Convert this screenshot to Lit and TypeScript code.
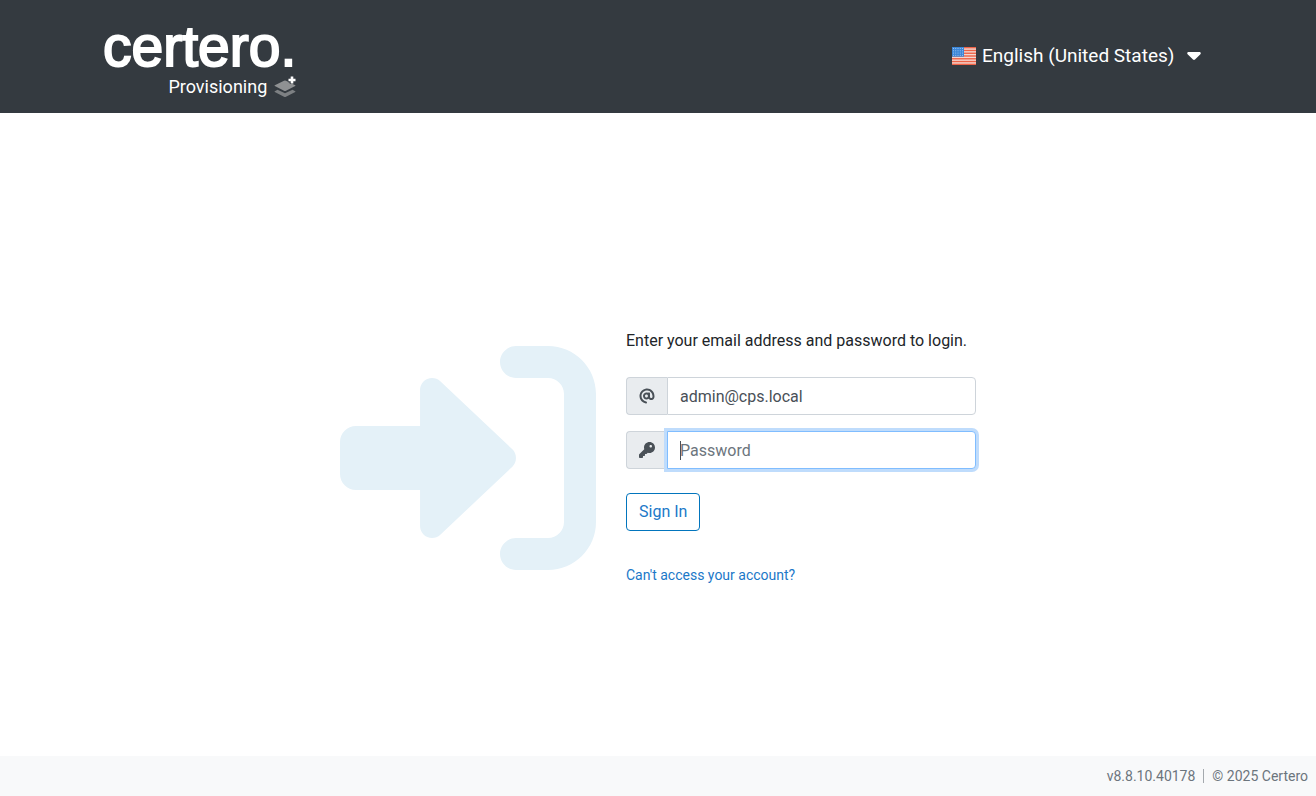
import { LitElement, html, css, svg } from "lit";
import { customElement, query, state } from "lit/decorators.js";

const stripes = [0, 1, 2, 3, 4, 5, 6];
const starRows = [0, 1, 2, 3];
const starCols = [0, 1, 2, 3, 4];

@customElement("app-header")
class AppHeader extends LitElement {
  static styles = css`
    :host {
      display: block;
      background: #343a40;
      color: #fff;
    }
    .bar {
      box-sizing: border-box;
      max-width: 1140px;
      margin: 0 auto;
      padding: 16px 15px 15px;
      display: flex;
      align-items: flex-start;
      justify-content: space-between;
    }
    .brand {
      display: flex;
      flex-direction: column;
      align-items: flex-end;
      color: inherit;
      text-decoration: none;
    }
    .name {
      font: 400 57px/60px "Liberation Sans", Arial, sans-serif;
      -webkit-text-stroke: 2px #fff;
    }
    .product {
      display: flex;
      align-items: center;
      gap: 7px;
      font-size: 18px;
      line-height: 20px;
    }
    .layers {
      width: 22px;
      height: 22px;
    }
    .language {
      display: flex;
      align-items: center;
      height: 80px;
      padding-right: 12px;
      gap: 6px;
    }
    .flag {
      width: 24px;
      height: 20px;
    }
    select {
      appearance: none;
      border: 0;
      margin: 0;
      padding: 0;
      background: none;
      color: inherit;
      font: inherit;
      font-size: 19px;
      line-height: 28px;
      outline: 0;
    }
    .caret {
      width: 14px;
      height: 8px;
      margin-left: 6px;
    }
  `;

  render() {
    return html`
      <header class="bar">
        <a class="brand" href="#">
          <span class="name">certero.</span>
          <span class="product">
            Provisioning
            <svg class="layers" viewBox="0 0 22 22" aria-hidden="true">
              <path fill="#7d8083" d="M0.8 15.2L3.5 13.8 11 17.3 18.5 13.8 21.2 15.2Q21.8 15.6 21.2 16L12 20.7Q11 21.1 10 20.7L0.8 16Q0.2 15.6 0.8 15.2Z" />
              <path fill="#8f9193" d="M0.8 9.2L10 4.8Q11 4.4 12 4.8L21.2 9.2Q21.8 9.7 21.2 10.1L12 14.7Q11 15.1 10 14.7L0.8 10.1Q0.2 9.7 0.8 9.2Z" />
              <path fill="none" stroke="#343a40" stroke-width="4.5" d="M18 0v8M14 4h8" />
              <path fill="none" stroke="#fff" stroke-width="2.6" d="M18 0.5v7M14.5 4h7" />
            </svg>
          </span>
        </a>
        <div class="language">
          <svg class="flag" viewBox="0 0 24 20" aria-hidden="true">
            <rect y="1" width="24" height="18" fill="#f3d8d2" />
            ${stripes.map((i) => svg`<rect y=${1 + i * 2.77} width="24" height="1.4" fill="#ee6246" />`)}
            <rect y="1" width="12" height="9.7" fill="#3b86d8" />
            ${starRows.map((r) =>
              starCols.map((c) => svg`<circle cx=${1.5 + c * 2.25} cy=${2.4 + r * 2.3} r="0.5" fill="#b9d7f5" />`)
            )}
          </svg>
          <select aria-label="Language">
            <option>English (United States)</option>
          </select>
          <svg class="caret" viewBox="0 0 14 8" aria-hidden="true">
            <path fill="#fff" d="M1.5 0h11c1.2 0 1.7 1.4.9 2.2L8 7.5c-.6.6-1.4.6-2 0L.6 2.2C-.2 1.4.3 0 1.5 0z" />
          </svg>
        </div>
      </header>
    `;
  }
}

@customElement("login-form")
class LoginForm extends LitElement {
  @state() email = "admin@cps.local";
  @query("#password") password!: HTMLInputElement;

  static styles = css`
    :host {
      display: block;
    }
    form {
      display: flex;
      flex-direction: column;
      align-items: flex-start;
      padding-bottom: 2px;
    }
    .intro {
      margin: 0 0 24px;
      font-size: 16px;
      line-height: 24px;
      color: #212529;
    }
    .group {
      display: flex;
      width: 100%;
      height: 38px;
      margin-bottom: 16px;
    }
    .addon {
      box-sizing: border-box;
      display: flex;
      align-items: center;
      padding: 0 12px;
      border: 1px solid #ced4da;
      border-right: 0;
      border-radius: 4px 0 0 4px;
      background: #e9ecef;
      color: #495057;
    }
    .addon svg {
      width: 16px;
      height: 16px;
      fill: currentColor;
    }
    input {
      box-sizing: border-box;
      flex: 1;
      min-width: 0;
      margin: 0;
      padding: 7px 12px 5px;
      border: 1px solid #ced4da;
      border-radius: 0 4px 4px 0;
      background: #fff;
      color: #495057;
      font: inherit;
      font-size: 16px;
      line-height: 24px;
      outline: 0;
    }
    input::placeholder {
      color: #6c757d;
      opacity: 1;
    }
    input:focus {
      border-color: #80bdff;
      box-shadow: 0 0 0 3px #bfdcfc;
    }
    /* Steady caret while the focused field is still empty. */
    input:focus:placeholder-shown {
      caret-color: transparent;
      background: linear-gradient(#495057, #495057) 12px center / 1px 19px no-repeat #fff;
    }
    button {
      margin: 8px 0 34px;
      padding: 6px 12px;
      border: 1px solid #0275bd;
      border-radius: 4px;
      background: #fff;
      color: #1b78c8;
      font: inherit;
      font-size: 16px;
      line-height: 24px;
    }
    .help {
      font-size: 14px;
      line-height: 20px;
      color: #1b78c8;
      text-decoration: none;
    }
  `;

  firstUpdated() {
    this.password.focus();
  }

  render() {
    return html`
      <form @submit=${(e: Event) => e.preventDefault()}>
        <p class="intro">Enter your email address and password to login.</p>
        <div class="group">
          <label class="addon" for="email" aria-label="Email address">
            <svg viewBox="0 0 512 512" aria-hidden="true">
              <path d="M207.8 20.73c-93.45 18.32-168.7 93.66-187 187.1c-27.64 140.9 68.65 266.2 199.1 285.1c19.01 2.888 36.17-12.26 36.17-31.49l.0001-.6631c0-15.74-11.44-28.88-26.84-31.24c-84.35-12.98-149.2-86.13-149.2-174.2c0-102.9 88.61-185.5 193.4-175.4c91.54 8.869 158.6 91.25 158.6 183.2l0 16.16c0 22.09-17.94 40.05-40 40.05s-40.01-17.96-40.01-40.05v-120.1c0-8.847-7.161-16.02-16.01-16.02l-31.98 .0036c-7.299 0-13.2 4.992-15.12 11.68c-24.85-12.15-54.24-16.38-86.06-5.106c-38.75 13.73-68.12 48.91-73.72 89.64c-9.483 69.01 43.81 128 110.9 128c26.44 0 50.43-9.544 69.59-24.88c24 31.3 65.23 48.69 109.4 37.49C465.2 369.3 496 324.1 495.1 277.2V256.3C495.1 107.1 361.2-9.332 207.8 20.73zM239.1 304.3c-26.47 0-48-21.56-48-48.05s21.53-48.05 48-48.05s48 21.56 48 48.05S266.5 304.3 239.1 304.3z" />
            </svg>
          </label>
          <input
            id="email"
            type="text"
            autocomplete="username"
            .value=${this.email}
            @input=${(e: Event) => (this.email = (e.target as HTMLInputElement).value)}
          />
        </div>
        <div class="group">
          <label class="addon" for="password" aria-label="Password">
            <svg viewBox="0 0 512 512" aria-hidden="true">
              <path d="M282.3 343.7L248.1 376.1C244.5 381.5 238.4 384 232 384H192V424C192 437.3 181.3 448 168 448H128V488C128 501.3 117.3 512 104 512H24C10.75 512 0 501.3 0 488V408C0 401.6 2.529 395.5 7.029 391L168.3 229.7C162.9 212.8 160 194.7 160 176C160 78.8 238.8 0 336 0C433.2 0 512 78.8 512 176C512 273.2 433.2 352 336 352C317.3 352 299.2 349.1 282.3 343.7zM376 176C398.1 176 416 158.1 416 136C416 113.9 398.1 96 376 96C353.9 96 336 113.9 336 136C336 158.1 353.9 176 376 176z" />
            </svg>
          </label>
          <input id="password" type="password" placeholder="Password" autocomplete="current-password" />
        </div>
        <button type="submit">Sign In</button>
        <a class="help" href="#">Can't access your account?</a>
      </form>
    `;
  }
}

@customElement("app-root")
class AppRoot extends LitElement {
  static styles = css`
    :host {
      display: flex;
      flex-direction: column;
      min-height: 100vh;
      background: #fff;
      font-family: Roboto, "Liberation Sans", sans-serif;
    }
    main {
      flex: 1;
      display: flex;
      align-items: center;
      justify-content: center;
      gap: 30px;
      padding-top: 47px;
    }
    .enter {
      width: 256px;
      height: 256px;
      fill: #e4f1f8;
    }
    .form {
      width: 350px;
    }
    footer {
      display: flex;
      align-items: center;
      justify-content: flex-end;
      gap: 8px;
      height: 40px;
      padding: 0 8px;
      background: #f8f9fa;
      color: #6c757d;
      font-size: 14px;
      line-height: 20px;
    }
    .rule {
      width: 1px;
      height: 14px;
      background: #a4a9ae;
    }
  `;

  render() {
    return html`
      <app-header></app-header>
      <main>
        <svg class="enter" viewBox="0 0 512 512" aria-hidden="true">
          <path d="M344.7 238.5l-144.1-136C193.7 95.97 183.4 94.17 174.6 97.95C165.8 101.8 160.1 110.4 160.1 120v72.03L32.02 192c-17.67 0-32.01 14.33-32.01 32v64c0 17.68 14.34 32 32.01 32l128.1-.0001v72c0 9.578 5.707 18.25 14.51 22.05c8.803 3.781 19.03 1.984 26-4.594l144.1-136C354.3 264.4 354.3 247.6 344.7 238.5zM416 32h-64c-17.67 0-32 14.33-32 32s14.33 32 32 32h64c17.67 0 32 14.33 32 32v256c0 17.67-14.33 32-32 32h-64c-17.67 0-32 14.33-32 32s14.33 32 32 32h64c53.02 0 96-42.98 96-96V128C512 74.98 469 32 416 32z" />
        </svg>
        <login-form class="form"></login-form>
      </main>
      <footer>
        <span>v8.8.10.40178</span>
        <span class="rule"></span>
        <span>© 2025 Certero</span>
      </footer>
    `;
  }
}
